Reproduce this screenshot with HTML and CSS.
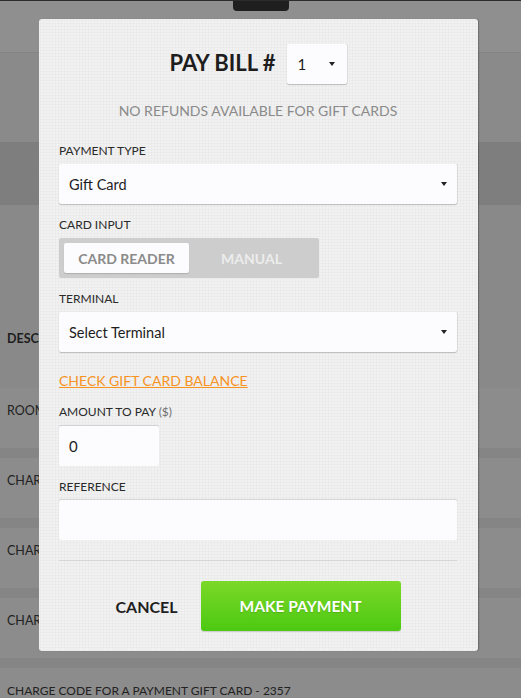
FILE: index.html
```html
<!DOCTYPE html>
<html>
<head>
<meta charset="utf-8">
<link rel="stylesheet" href="styles.css">
</head>
<body>
<div class="page">
  <div class="topbar"><div class="tab"></div></div>
  <div class="subbar"></div>
  <div class="band"></div>
  <div class="thead">DESC</div>
  <div class="row">ROOM</div>
  <div class="row">CHAR</div>
  <div class="row">CHAR</div>
  <div class="row">CHAR</div>
  <div class="row last">CHARGE CODE FOR A PAYMENT GIFT CARD - 2357</div>
</div>

<div class="modal">
  <div class="title-row">
    <h1 class="title">PAY BILL #</h1>
    <div class="select small"><span>1</span><i class="caret"></i></div>
  </div>
  <p class="notice">NO REFUNDS AVAILABLE FOR GIFT CARDS</p>

  <label class="label">PAYMENT TYPE</label>
  <div class="select"><span>Gift Card</span><i class="caret"></i></div>

  <label class="label">CARD INPUT</label>
  <div class="segmented">
    <div class="seg active">CARD READER</div>
    <div class="seg">MANUAL</div>
  </div>

  <label class="label">TERMINAL</label>
  <div class="select"><span>Select Terminal</span><i class="caret"></i></div>

  <a class="link">CHECK GIFT CARD BALANCE</a>

  <label class="label">AMOUNT TO PAY <span class="muted">($)</span></label>
  <div class="input short">0</div>

  <label class="label">REFERENCE</label>
  <div class="input"></div>

  <div class="divider"></div>

  <div class="actions">
    <span class="cancel">CANCEL</span>
    <span class="pay">MAKE PAYMENT</span>
  </div>
</div>
</body>
</html>
```

FILE: styles.css
```css
* { box-sizing: border-box; }
html, body { margin: 0; padding: 0; }
body {
  width: 521px;
  height: 698px;
  overflow: hidden;
  background: #8c8c8c;
  font-family: "Lato", "Noto Sans", sans-serif;
  color: #222;
  position: relative;
}
.page { display: flex; flex-direction: column; height: 698px; overflow: hidden; }
.page > * { flex: none; }
.topbar {
  height: 53px;
  background: #8f8f8f;
  border-top: 1px solid #2c2c2c;
  border-bottom: 1px solid #838383;
  display: flex;
  justify-content: center;
}
.tab {
  width: 56px;
  height: 10px;
  background: #1f1f1f;
  border-radius: 0 0 4px 4px;
}
.subbar { height: 89px; background: #8a8a8a; }
.band { height: 63px; background: #7e7e7e; }
.thead {
  height: 183px;
  background: #898989;
  padding: 126px 0 0 7px;
  font-size: 12.5px;
  font-weight: 700;
  color: #1e1e1e;
  line-height: 16px;
}
.row {
  height: 60px;
  margin-bottom: 10px;
  background: #8c8c8c;
  box-shadow: 0 10px 0 #858585;
  padding: 15px 0 0 7px;
  font-size: 12.5px;
  line-height: 16px;
  color: #222;
  white-space: nowrap;
}
.row.last { height: 30px; margin-bottom: 0; box-shadow: none; font-size: 12px; }

.modal {
  position: absolute;
  left: 39px;
  top: 19px;
  width: 439px;
  height: 632px;
  background-color: #f1f1f1;
  background-image: radial-gradient(circle, rgba(0,0,0,0.045) 0.8px, transparent 1.1px);
  background-size: 3px 3px;
  border-radius: 3px;
  box-shadow: 1px 0 1px rgba(0,0,0,0.25);
  padding: 25px 21px 19px 20px;
  display: flex;
  flex-direction: column;
}
.modal > * { flex: none; }
.title-row {
  display: flex;
  justify-content: center;
  align-items: center;
  gap: 11px;
  height: 40px;
}
.title {
  margin: 0 0 3px;
  font-size: 22px;
  font-weight: 700;
  color: #1d1d1d;
}
.select {
  height: 40px;
  background: #fcfbfd;
  border-radius: 2px;
  box-shadow: 0 1px 1px rgba(0,0,0,0.22), 1px 0 0 rgba(0,0,0,0.06);
  display: flex;
  align-items: center;
  justify-content: space-between;
  padding: 0 10px;
  font-size: 14.5px;
  color: #1d1d1d;
}
.select.small { width: 60px; font-size: 15px; padding: 0 12px 0 11px; }
.caret {
  width: 0; height: 0;
  border-left: 3px solid transparent;
  border-right: 3px solid transparent;
  border-top: 4px solid #222;
}
.notice {
  margin: 17px 0 0;
  text-align: center;
  font-size: 14px;
  line-height: 20px;
  color: #8a8a8a;
}
.label {
  display: block;
  margin: 11px 0 3px;
  font-size: 12px;
  line-height: 20px;
  color: #2a2a2a;
}
.notice + .label { margin-top: 20px; }
.muted { color: #707070; }
.segmented {
  width: 260px;
  height: 40px;
  background: #cdcdcd;
  border-radius: 2px;
  padding: 5px;
  display: flex;
}
.seg {
  flex: 1;
  display: flex;
  align-items: center;
  justify-content: center;
  font-size: 14px;
  font-weight: 700;
  color: #ececec;
}
.seg.active {
  background: #fcfbfd;
  border-radius: 2px;
  color: #8a8a8a;
  box-shadow: 0 1px 1px rgba(0,0,0,0.15);
}
.link {
  margin-top: 19px;
  font-size: 14px;
  line-height: 20px;
  color: #f7931e;
  text-decoration: underline;
  align-self: flex-start;
}
.link + .label { margin-top: 11px; }
.input {
  height: 40px;
  background: #fcfbfd;
  border-radius: 2px;
  box-shadow: 0 -1px 1px rgba(0,0,0,0.12);
  padding: 0 10px;
  display: flex;
  align-items: center;
  font-size: 15px;
  color: #1d1d1d;
}
.input.short { width: 100px; margin-top: 1px; }
.divider {
  margin-top: 20px;
  height: 1px;
  background: #d6d6d6;
}
.actions {
  margin-top: 20px;
  display: flex;
  justify-content: center;
  align-items: center;
  gap: 23px;
}
.cancel {
  font-size: 16px;
  font-weight: 700;
  color: #1f1f1f;
}
.pay {
  width: 200px;
  height: 50px;
  border-radius: 3px;
  background: linear-gradient(#7bd828, #4cc912);
  display: flex;
  align-items: center;
  justify-content: center;
  font-size: 15.5px;
  font-weight: 700;
  color: #fff;
  text-shadow: 0 1px 1px rgba(0,0,0,0.15);
  box-shadow: 0 1px 1px rgba(0,0,0,0.15);
}
```
